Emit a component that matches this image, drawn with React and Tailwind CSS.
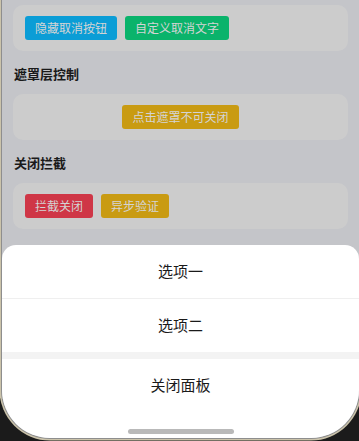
import React from "react";

const font = { fontFamily: '"Noto Sans CJK SC", "Noto Sans", sans-serif' };

function Btn({ children, color }) {
  return (
    <div
      className={`h-6 px-[10px] flex items-center rounded-[3px] text-[12px] leading-none text-[#d4d4d4] ${color}`}
    >
      {children}
    </div>
  );
}

function Heading({ children }) {
  return (
    <div className="mx-[12px] mt-[13px] mb-[10px] h-5 flex items-center text-[13px] font-bold text-[#1a1a1a]">
      {children}
    </div>
  );
}

function Card({ children, center }) {
  return (
    <div
      className={`mx-[11px] rounded-[10px] bg-[#cccccc] px-[12px] py-[11px] flex gap-2 ${center ? "justify-center" : ""}`}
    >
      {children}
    </div>
  );
}

function Item({ children }) {
  return (
    <div className="h-[53px] flex items-center justify-center text-[15px] text-[#1a1a1a]">
      {children}
    </div>
  );
}

export default function App() {
  return (
    <div className="w-[359px] h-[441px] bg-[#1b1b1b] overflow-hidden" style={font}>
      <div className="w-[357px] h-[438px] ml-[2px] rounded-b-[48px] overflow-hidden bg-[#c4c5c9] flex flex-col shadow-[0_0_0_1px_#8e8e8e,0_0_0_2.5px_#cbc3aa]">
        <div className="pt-[5px]">
          <Card>
            <Btn color="bg-[#0b9dd6]">隐藏取消按钮</Btn>
            <Btn color="bg-[#0ab36b]">自定义取消文字</Btn>
          </Card>
          <Heading>遮罩层控制</Heading>
          <Card center>
            <Btn color="bg-[#c99b12]">点击遮罩不可关闭</Btn>
          </Card>
          <Heading>关闭拦截</Heading>
          <Card>
            <Btn color="bg-[#cf3646]">拦截关闭</Btn>
            <Btn color="bg-[#c99b12]">异步验证</Btn>
          </Card>
        </div>
        <div className="mt-auto bg-white rounded-t-[14px] flex flex-col">
          <Item>选项一</Item>
          <div className="h-px bg-[#efefef]" />
          <Item>选项二</Item>
          <div className="h-[7px] bg-[#f3f3f3]" />
          <Item>关闭面板</Item>
          <div className="h-[26px] flex justify-center pt-[17px]">
            <div className="w-[106px] h-[5px] rounded-full bg-[#b9b9b9]" />
          </div>
        </div>
      </div>
    </div>
  );
}
